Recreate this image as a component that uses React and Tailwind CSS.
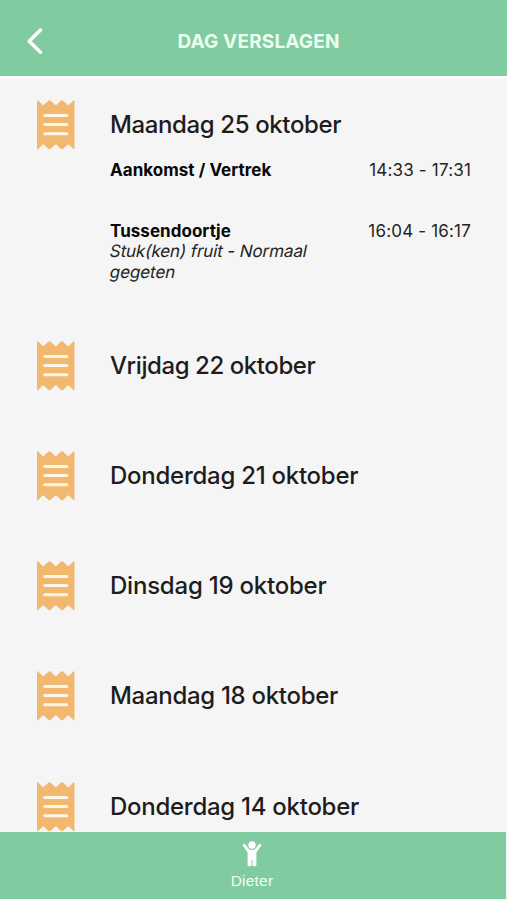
const days = [
  {
    title: "Maandag 25 oktober",
    height: "h-[241px]",
    tracking: "tracking-[-0.38px]",
    entries: [
      { name: "Aankomst / Vertrek", time: "14:33 - 17:31", space: "h-[61px]" },
      { name: "Tussendoortje", time: "16:04 - 16:17", note: ["Stuk(ken) fruit - Normaal", "gegeten"], space: "h-[62px]" },
    ],
  },
  { title: "Vrijdag 22 oktober", height: "h-[110px]", tracking: "tracking-[-0.42px]" },
  { title: "Donderdag 21 oktober", height: "h-[110px]", tracking: "tracking-[-0.26px]" },
  { title: "Dinsdag 19 oktober", height: "h-[110px]", tracking: "tracking-[-0.22px]" },
  { title: "Maandag 18 oktober", height: "h-[111px]", tracking: "tracking-[-0.3px]" },
  { title: "Donderdag 14 oktober", height: "h-[110px]", tracking: "tracking-[-0.27px]" },
];

function ReceiptIcon() {
  return (
    <svg className="ml-[37px] h-[50px] w-[38px] shrink-0" viewBox="0 0 38 50" fill="none">
      <path
        d="M0 1Q0-.4 1.2.5L5.4 4.7Q6.2 5.3 7 4.7L11.6.6Q12.5 0 13.4.6L18 4.7Q18.8 5.3 19.6 4.7L24.1.6Q25 0 25.9.6L30.5 4.7Q31.3 5.3 32.1 4.7L36.3.5Q37.5-.4 37.5 1V48.5Q37.5 49.9 36.3 49L32.1 44.8Q31.3 44.2 30.5 44.8L25.9 48.9Q25 49.5 24.1 48.9L19.6 44.8Q18.8 44.2 18 44.8L13.4 48.9Q12.5 49.5 11.6 48.9L7 44.8Q6.2 44.2 5.4 44.8L1.2 49Q0 49.9 0 48.5Z"
        fill="#f3b870"
      />
      <path d="M7.7 15.4H29.7M7.7 24.6H29.7M7.7 33.7H29.7" stroke="#fff6e8" strokeWidth="3" strokeLinecap="round" />
    </svg>
  );
}

function Entry({ entry }) {
  return (
    <div className={`flex justify-between text-[17px] leading-[21px] ${entry.space}`}>
      <div>
        <div className="mb-[-1px] font-bold tracking-[0.04px] text-[#080808]">{entry.name}</div>
        {entry.note?.map((line) => (
          <div key={line} className="-skew-x-12 whitespace-nowrap tracking-[-0.1px] text-[#242424]">{line}</div>
        ))}
      </div>
      <div className="whitespace-nowrap tracking-[0.18px] text-[#242424]">{entry.time}</div>
    </div>
  );
}

export default function App() {
  return (
    <div className="flex h-[900px] w-[507px] flex-col overflow-hidden bg-[#f5f5f5] font-['Inter','Liberation_Sans',sans-serif]">
      <header className="grid h-[78px] shrink-0 grid-cols-[1fr_auto_1fr] items-center border-b-2 border-white bg-[#80cb9f]">
        <svg className="mt-[6px] ml-[26px] h-[28px] w-[18px]" viewBox="0 0 18 28" fill="none">
          <path d="M14.5 3 3.2 14.2 14.5 25.2" stroke="#fff" strokeWidth="3.5" strokeLinecap="round" strokeLinejoin="round" />
        </svg>
        <h1 className="mt-[8px] mr-[-10px] text-[19px] leading-6 font-bold tracking-[0.16px] text-[#eafff0]">DAG VERSLAGEN</h1>
        <span />
      </header>
      <main className="min-h-0 flex-1 overflow-hidden pt-[22px]">
        {days.map((day) => (
          <section key={day.title} className={`flex ${day.height}`}>
            <ReceiptIcon />
            <div className="ml-[35px] w-[361px]">
              <h2 className={`text-[24px] leading-[50px] font-medium whitespace-nowrap text-[#1d1d1d] ${day.tracking}`}>{day.title}</h2>
              <div className="pt-[10px]">
                {day.entries?.map((entry) => <Entry key={entry.name} entry={entry} />)}
              </div>
            </div>
          </section>
        ))}
      </main>
      <footer className="mr-px mb-px flex h-[67px] shrink-0 flex-col items-center bg-[#80cb9f] pt-[9px] pr-[2px] text-white">
        <svg className="h-[26px] w-[20px]" viewBox="0 0 20 26" fill="none">
          <circle cx="10" cy="4" r="3.7" fill="currentColor" />
          <path d="M2.2 4.3 7 10.5H13L17.8 4.3" stroke="currentColor" strokeWidth="2.9" strokeLinecap="round" strokeLinejoin="round" />
          <path d="M5.6 8.8H14.4V24Q14.4 25.3 13 25.3H11.6Q10.5 25.3 10.5 24V19H9.5V24Q9.5 25.3 8.4 25.3H7Q5.6 25.3 5.6 24Z" fill="currentColor" />
        </svg>
        <span className="mt-[4px] font-['Liberation_Sans',sans-serif] text-[15.5px] leading-5 tracking-[0.2px] text-[#f1fff6]">Dieter</span>
      </footer>
    </div>
  );
}
